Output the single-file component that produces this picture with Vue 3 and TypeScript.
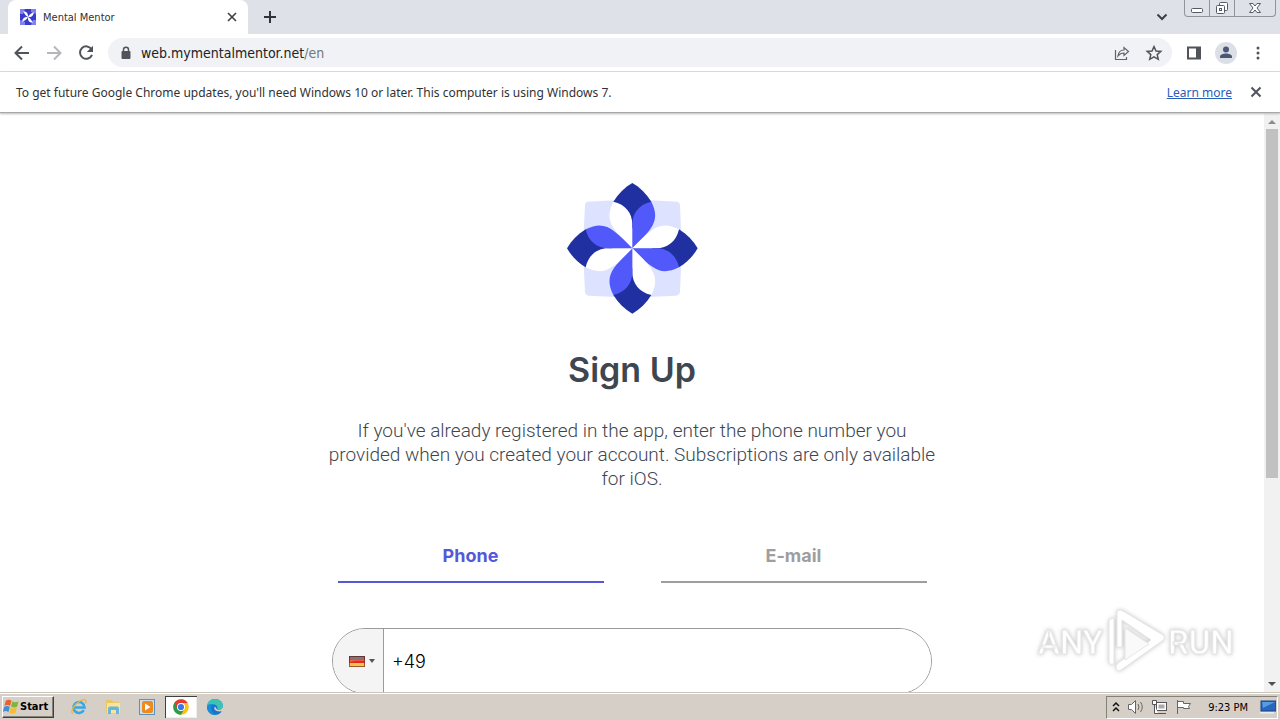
<script setup lang="ts">
import { ref } from 'vue'

type Method = 'phone' | 'email'

const method = ref<Method>('phone')
const phone = ref('+49')
const address = ref('web.mymentalmentor.net')
const quarterTurns = [0, 90, 180, 270]
const methods: { id: Method; label: string }[] = [
  { id: 'phone', label: 'Phone' },
  { id: 'email', label: 'E-mail' },
]
</script>

<template>
  <div class="screen">
    <header class="tab-strip">
      <div class="prev-tab"></div>
      <div class="tab">
        <svg class="favicon" viewBox="0 0 16 16" aria-hidden="true">
          <rect width="16" height="16" fill="#3a3ad0" />
          <path d="M0 0h5L3 5H0zM16 0v5l-5-2V0zM16 16h-5l2-5h3zM0 16v-5l5 2v3z" fill="#7f83ee" />
          <path d="M8 8C5.500 7 5 5 3 2.500 6 2 8.500 4 8 8zM8 8c1-2.500 3-3 5.500-5C14 6 12 8.500 8 8zM8 8c2.500 1 3 3 5 5.500-3 .500-5.500-1.500-5-5.500zM8 8c-1 2.500-3 3-5.500 5C2 10 4 7.500 8 8z" fill="#fff" />
        </svg>
        <span class="tab-title">Mental Mentor</span>
        <button class="icon-btn" aria-label="Close tab">
          <svg viewBox="0 0 16 16" width="16" height="16"><path d="M4 4l8 8M12 4l-8 8" stroke="#3c4043" stroke-width="1.600" /></svg>
        </button>
      </div>
      <button class="icon-btn new-tab" aria-label="New tab">
        <svg viewBox="0 0 16 16" width="16" height="16"><path d="M8 2v12M2 8h12" stroke="#30343a" stroke-width="2" /></svg>
      </button>
      <button class="icon-btn tab-search" aria-label="Search tabs">
        <svg viewBox="0 0 16 16" width="16" height="16"><path d="M3.500 5.500L8 10l4.500-4.500" fill="none" stroke="#3c4043" stroke-width="2" /></svg>
      </button>
      <div class="window-controls">
        <button aria-label="Minimize">
          <svg viewBox="0 0 24 16" width="24" height="16"><rect x="6.500" y="8.500" width="11" height="4" rx="1" fill="#fff" stroke="#555b66" /></svg>
        </button>
        <button aria-label="Restore">
          <svg viewBox="0 0 24 16" width="24" height="16" fill="#fff" stroke="#555b66"><rect x="9.500" y="2.500" width="8" height="8" rx="1" /><rect x="6.500" y="5.500" width="8" height="8" rx="1" /><rect x="9.500" y="8.500" width="2" height="2" /></svg>
        </button>
        <button class="close-window" aria-label="Close">
          <svg viewBox="0 0 24 16" width="24" height="16"><path d="M6.500 3.500h3.500l2 2.500 2-2.500h3.500L14 8l3.500 4.500H14l-2-2.500-2 2.500H6.500L10 8z" fill="#fff" stroke="#555b66" /></svg>
        </button>
      </div>
    </header>

    <nav class="toolbar">
      <button class="icon-btn" aria-label="Back">
        <svg viewBox="0 0 20 20" width="20" height="20" fill="none" stroke="#50545a" stroke-width="2"><path d="M17 10H4M10 3.500L3.500 10l6.500 6.500" /></svg>
      </button>
      <button class="icon-btn" aria-label="Forward" disabled>
        <svg viewBox="0 0 20 20" width="20" height="20" fill="none" stroke="#b5b7ba" stroke-width="2"><path d="M3 10h13M10 3.500l6.500 6.500-6.500 6.500" /></svg>
      </button>
      <button class="icon-btn" aria-label="Reload">
        <svg viewBox="0 0 20 20" width="20" height="20"><path d="M15.600 6.500A6.200 6.200 0 1 0 16 11.800" fill="none" stroke="#50545a" stroke-width="2" /><path d="M17 2.800V9h-6.200z" fill="#50545a" /></svg>
      </button>
      <div class="omnibox">
        <svg class="lock" viewBox="0 0 12 14" width="12" height="14"><rect x="1.500" y="5" width="9" height="8" rx="1" fill="#50545a" /><path d="M3.500 6V3.800a2.500 2.500 0 0 1 5 0V6" fill="none" stroke="#50545a" stroke-width="1.500" /></svg>
        <a class="url" href="#">{{ address }}<span>/en</span></a>
        <button class="icon-btn" aria-label="Share">
          <svg viewBox="0 0 18 18" width="18" height="18" fill="none" stroke="#5f6368" stroke-width="1.200"><path d="M2.500 6v9.500h11V13" /><path d="M5 12c.500-4 3-6 6-6V3.500L15.500 7.500 11 11.500V9C8.500 9 6.500 10 5 12z" /></svg>
        </button>
        <button class="icon-btn" aria-label="Bookmark this page">
          <svg viewBox="0 0 18 18" width="18" height="18"><path d="M9 2.500l2 4.500 4.800.400-3.600 3.200 1.100 4.700L9 12.800l-4.300 2.500 1.100-4.700-3.600-3.200L7 7z" fill="none" stroke="#50545a" stroke-width="1.500" /></svg>
        </button>
      </div>
      <div class="toolbar-end">
        <button class="icon-btn" aria-label="Side panel">
          <svg viewBox="0 0 16 16" width="16" height="16"><path d="M1 1.500h14v13H1zM3 3.500v9h7v-9z" fill="#50545a" fill-rule="evenodd" /></svg>
        </button>
        <button class="icon-btn" aria-label="Profile">
          <svg viewBox="0 0 22 22" width="22" height="22"><circle cx="11" cy="11" r="11" fill="#dcdfe5" /><circle cx="11" cy="7.500" r="3" fill="#4b5876" /><path d="M5 16v-1.500c0-2 3.500-3 6-3s6 1 6 3V16z" fill="#4b5876" /></svg>
        </button>
        <button class="icon-btn" aria-label="Menu">
          <svg viewBox="0 0 16 16" width="16" height="16" fill="#50545a"><circle cx="8" cy="3" r="1.500" /><circle cx="8" cy="8" r="1.500" /><circle cx="8" cy="13" r="1.500" /></svg>
        </button>
      </div>
    </nav>

    <aside class="infobar">
      <p>To get future Google Chrome updates, you'll need Windows 10 or later. This computer is using Windows 7.</p>
      <a href="#">Learn more</a>
      <button class="icon-btn" aria-label="Dismiss">
        <svg viewBox="0 0 16 16" width="16" height="16"><path d="M3.500 3.500l9 9M12.500 3.500l-9 9" stroke="#50545a" stroke-width="2" /></svg>
      </button>
    </aside>

    <div class="viewport">
      <main class="page">
        <svg class="logo" viewBox="-202 -202 402 402" role="img" aria-label="Mental Mentor">
          <path d="M-135-140Q0-150 135-140Q142-138 143-130Q150 0 143 130Q142 140 130 142Q0 150-130 142Q-141 141-142 130Q-150 0-142-130Q-141-139-135-140Z" fill="#dde2ff" />
          <g v-for="turn in quarterTurns" :key="turn" :transform="`rotate(${turn})`">
            <path d="M0-196C-23-183-42-164-57-140L-5-60H5L57-140C42-164 23-183 0-196Z" fill="#2130a0" />
            <path d="M0 0C-58-57-86-82-57-140C-20-132 0-105 0-72Z" fill="#fff" />
            <path d="M0 0C58-57 86-82 57-140C20-132 0-105 0-72Z" fill="#5259fb" />
          </g>
        </svg>
        <h1>Sign Up</h1>
        <p class="lead">If you've already registered in the app, enter the phone number you provided when you created your account. Subscriptions are only available for iOS.</p>
        <div class="methods" role="tablist">
          <button
            v-for="m in methods"
            :key="m.id"
            role="tab"
            :aria-selected="method === m.id"
            :class="{ active: method === m.id }"
            @click="method = m.id"
          >{{ m.label }}</button>
        </div>
        <div class="phone-field">
          <button class="country" aria-label="Country: Germany">
            <svg viewBox="0 0 16 11" width="16" height="11"><rect width="16" height="4" fill="#504848" /><rect y="4" width="16" height="3" fill="#e52a18" /><rect y="7" width="16" height="4" fill="#fbc24a" /><path d="M1 1h14v4q-7-1-14 1z" fill="#fff" fill-opacity=".25" /><rect x=".5" y=".5" width="15" height="10" fill="none" stroke="#6d2f25" stroke-opacity=".7" /></svg>
            <svg viewBox="0 0 6 4" width="6" height="4"><path d="M0 0h6L3 4z" fill="#555" /></svg>
          </button>
          <input v-model="phone" type="tel" aria-label="Phone number" />
        </div>
      </main>
      <div class="scrollbar" aria-hidden="true">
        <svg viewBox="0 0 16 14" width="16" height="14"><path d="M4 11h8L8 7z" fill="#8b8b8b" /></svg>
        <div class="thumb"></div>
        <svg viewBox="0 0 16 16" width="16" height="16"><path d="M4 6h8l-4 4z" fill="#505050" /></svg>
      </div>
      <svg class="watermark" viewBox="0 0 210 72" role="img" aria-label="ANY RUN">
        <g class="mark">
          <text x="6" y="48">ANY</text>
          <path d="M77 56V15q0-2 5-3v46q-5 1-5-2zM85 5q3-2 6 0l40 24q3 3-1 6l-41 29q-4 2-5-2 0-3 2-5l33-23L90 14v27h-5z" />
          <path d="M93 22v32l24-16z" fill="#fafafa" />
          <text x="136" y="48">RUN</text>
        </g>
      </svg>
    </div>

    <footer class="taskbar">
      <button class="start">
        <svg viewBox="0 0 18 18" width="17" height="17"><path d="M3 3c2-1.500 4-1.500 6 0L7.500 8.500c-2-1.500-4-1.500-6 0z" fill="#e8622c" /><path d="M10 3.500c2 1.300 4 1.300 6.500 0L15 9c-2 1.500-4.500 1.200-6.500 0z" fill="#7fb540" /><path d="M1.200 9.500c2-1.500 4-1.500 6 0L5.700 15c-2-1.500-4-1.500-6 0z" fill="#3f8fd6" /><path d="M8.200 10c2 1.300 4 1.300 6.500 0l-1.500 5.500c-2 1.500-4.500 1.200-6.500 0z" fill="#f5bd32" /></svg>
        Start
      </button>
      <div class="tasks">
        <button aria-label="Internet Explorer">
          <svg viewBox="0 0 18 18" width="18" height="18" fill="none"><path d="M13.800 12.200A5.500 5.500 0 1 1 14.500 9.500H5" stroke="#3aa6e4" stroke-width="2.600" /><path d="M3 15.500C-.5 15 4 6.500 10 3c5-2.500 7-1.500 5.500 2.500" stroke="#e8b83c" stroke-width="1.300" /></svg>
        </button>
        <button aria-label="Windows Explorer">
          <svg viewBox="0 0 18 18" width="18" height="18"><path d="M2 2h6l1 2h6v11H2z" fill="#e9c95f" /><path d="M3 5h13v10H3z" fill="#f8e59a" /><path d="M4 16v-5c0-2 1-2.500 3-2.500h5c2 0 3 .500 3 2.500v5h-3v-4H7v4z" fill="#68b6da" /></svg>
        </button>
        <button aria-label="Media Player">
          <svg viewBox="0 0 18 18" width="18" height="18"><rect x="1.500" y="1.500" width="15" height="15" fill="#c9e0f2" stroke="#5a93c2" /><rect x="4" y="3" width="11" height="12" rx="2" fill="#f08a1c" /><path d="M7 5.500v7l5.500-3.500z" fill="#fff" /></svg>
        </button>
        <button class="current" aria-label="Google Chrome">
          <svg viewBox="0 0 18 18" width="18" height="18"><circle cx="9" cy="9" r="7.800" fill="#fbc116" /><path d="M9 9L2.250 5.100A7.800 7.800 0 0 0 9 16.800l3.400-5.900z" fill="#2a9c4a" /><path d="M9 5.100h6.750a7.800 7.800 0 0 0-13.500 0L5.600 11z" fill="#e33b2e" /><circle cx="9" cy="9" r="4" fill="#fff" /><circle cx="9" cy="9" r="3.100" fill="#3a78e8" /></svg>
        </button>
        <button aria-label="Microsoft Edge">
          <svg viewBox="0 0 18 18" width="18" height="18"><circle cx="9" cy="9" r="8" fill="#1774cc" /><path d="M1 9C1 4.500 4.500 1 9 1s8 3 8 7c0 3-3 4.500-6 3.500 1-1.500.500-4.500-3-5C5 6 2 6.500 1 9z" fill="#3cc3b4" /><path d="M1 9c1-3 4-3.500 6.500-2.500C4 8 4.500 14 9.500 16.900 4.500 17.500 1 13.500 1 9z" fill="#1b8bdc" /><path d="M9 8.500c-2 2 0 5.500 6.500 4.800l1.500 1V9c-1 3-5 3.500-6 2.500z" fill="#d6cfc7" /></svg>
        </button>
      </div>
      <div class="tray">
        <svg viewBox="0 0 10 12" width="10" height="12" fill="none" stroke="#111" stroke-width="1.500"><path d="M2 5l3-3 3 3M2 10l3-3 3 3" /></svg>
        <svg viewBox="0 0 18 16" width="18" height="16" fill="#fff" stroke="#666"><path d="M1.500 5.500h3l4-4v13l-4-4h-3z" /><path d="M11 5q2 3 0 6M13.500 3q3.500 5 0 10" fill="none" /></svg>
        <svg viewBox="0 0 18 16" width="18" height="16" fill="#fff" stroke="#555"><rect x="5.500" y="3.500" width="10" height="8" /><rect x="7.500" y="5.500" width="6" height="4" fill="#aaa" stroke="none" /><path d="M7 14.500h8M1.500 1.500h4v4h-4zM3.500 5.500v9H7" /></svg>
        <svg viewBox="0 0 18 16" width="18" height="16" fill="#fff" stroke="#666"><path d="M2.500 1v14M2.500 2.500h6v2h7l-2 3 1 2h-6v-1h-6z" /></svg>
        <time>9:23 PM</time>
        <svg viewBox="0 0 16 14" width="16" height="14"><rect x="1" y="1" width="15" height="10" fill="#2867bd" stroke="#19437f" /><path d="M2 2h13L3 8z" fill="#579be5" /><path d="M0 12h14v1.500H0z" fill="#e6edf6" /></svg>
      </div>
    </footer>
  </div>
</template>

<style>
html,
body {
  margin: 0;
  overflow: hidden;
}
</style>

<style scoped>
.screen {
  display: flex;
  flex-direction: column;
  height: 100vh;
  background: #fff;
  font-family: "DejaVu Sans Condensed", sans-serif;
  font-size: 12px;
  color: #303236;
}
button {
  padding: 0;
  border: 0;
  background: none;
  font: inherit;
  color: inherit;
}
svg {
  display: block;
  flex: none;
}
.icon-btn {
  display: grid;
  place-items: center;
  flex: none;
}
.tab-strip {
  display: flex;
  flex: none;
  height: 34px;
  background: #dee1e8;
}
.prev-tab {
  width: 8px;
  flex: none;
}
.tab {
  display: flex;
  align-items: center;
  width: 240px;
  box-sizing: border-box;
  padding: 0 8px 0 12px;
  background: #fff;
  border-radius: 8px 8px 0 0;
}
.favicon {
  width: 16px;
  height: 16px;
  margin-right: 7px;
}
.tab-title {
  flex: 1;
  font-size: 11px;
}
.new-tab {
  width: 44px;
}
.tab-search {
  width: 24px;
  margin-left: auto;
}
.window-controls {
  display: flex;
  height: 16px;
  margin: 0 4px 0 10px;
  border: 1px solid #8e939d;
  border-top: 0;
  border-radius: 0 0 4px 4px;
}
.window-controls button {
  width: 25px;
  display: grid;
  place-items: center;
  border-right: 1px solid #8e939d;
}
.window-controls .close-window {
  width: 40px;
  border: 0;
}
.toolbar {
  display: flex;
  align-items: center;
  flex: none;
  height: 37px;
  padding: 0 12px;
  gap: 12px;
  border-bottom: 1px solid #d9dbde;
}
.omnibox {
  display: flex;
  align-items: center;
  flex: 1;
  height: 29px;
  padding: 0 9px 0 12px;
  border-radius: 15px;
  background: #f0f2f5;
  gap: 14px;
}
.lock {
  margin-right: -5px;
}
.url {
  flex: 1;
  font-size: 14px;
  color: #202124;
  text-decoration: none;
}
.url span {
  color: #74777c;
}
.toolbar-end {
  display: flex;
  align-items: center;
  gap: 13px;
  margin: 0 2px;
}
.infobar {
  display: flex;
  align-items: center;
  flex: none;
  height: 40px;
  padding: 0 16px;
  gap: 16px;
  border-bottom: 1px solid #a8a8a8;
  box-shadow: 0 1px 2px #bbb;
  z-index: 1;
  font-family: "Noto Sans", sans-serif;
}
.infobar p {
  flex: 1;
  margin: 0;
}
.infobar a {
  color: #2a5db8;
}
.viewport {
  position: relative;
  display: flex;
  flex: 1;
  min-height: 0;
  overflow: hidden;
}
.page {
  flex: 1;
  display: flex;
  flex-direction: column;
  align-items: center;
  padding-top: 68px;
  font-family: Inter, sans-serif;
  color: #40464f;
}
.logo {
  width: 134px;
  height: 134px;
}
h1 {
  margin: 33px 0 27px;
  font-size: 34px;
  line-height: 44px;
  font-weight: 600;
}
.lead {
  width: 610px;
  max-width: 100%;
  margin: 0;
  font-family: Roboto, sans-serif;
  font-size: 19px;
  line-height: 24px;
  font-weight: 300;
  text-align: center;
}
.methods {
  display: grid;
  grid-template-columns: 1fr 1fr;
  gap: 57px;
  width: 589px;
  max-width: 100%;
  margin: 38px 0 45px;
}
.methods button {
  height: 54px;
  border-bottom: 2px solid #9e9e9e;
  color: #9e9e9e;
  font-size: 18px;
  font-weight: 700;
}
.methods .active {
  border-color: #5559d9;
  color: #5559d9;
}
.phone-field {
  display: flex;
  flex: none;
  width: 600px;
  max-width: 100%;
  height: 66px;
  box-sizing: border-box;
  border: 1px solid #9a9a9a;
  border-radius: 33px;
  overflow: hidden;
}
.country {
  display: flex;
  align-items: center;
  gap: 4px;
  width: 51px;
  flex: none;
  padding-left: 16px;
  box-sizing: border-box;
  background: #f4f4f4;
  border-right: 1px solid #9a9a9a;
}
.phone-field input {
  flex: 1;
  min-width: 0;
  padding: 0 8px;
  border: 0;
  outline: 0;
  background: #fff;
  font: 300 18px Inter, sans-serif;
  color: #000;
}
.scrollbar {
  display: flex;
  flex-direction: column;
  width: 16px;
  background: #f1f1f1;
}
.scrollbar .thumb {
  width: 12px;
  height: 349px;
  margin: 2px auto auto;
  background: #c1c1c1;
}
.watermark {
  position: absolute;
  right: 38px;
  bottom: 14px;
  width: 210px;
  height: 72px;
}
.mark {
  fill: #fff;
  stroke: #e6e6e6;
  stroke-width: 1;
  filter: drop-shadow(0 0 2px #c4c4c4);
}
.mark text {
  font: 500 33px Roboto, sans-serif;
}
.taskbar {
  display: flex;
  align-items: center;
  flex: none;
  height: 27px;
  border-top: 1px solid #c9c6b9;
  box-shadow: inset 0 1px #fff;
  background: #d6cfc7;
  color: #000;
}
.start {
  display: flex;
  align-items: center;
  width: 52px;
  height: 22px;
  box-sizing: border-box;
  margin-left: 2px;
  border: 1px solid;
  border-color: #fff #404040 #404040 #fff;
  box-shadow: inset -1px -1px #858078;
  font-size: 11px;
  font-weight: 700;
}
.tasks {
  display: flex;
  margin-left: 9px;
  gap: 2px;
}
.tasks button {
  display: grid;
  place-items: center;
  width: 32px;
  height: 22px;
}
.tasks .current {
  background: #fff;
  box-shadow: inset 1px 1px #404040, inset -1px -1px #eee;
}
.tray {
  display: flex;
  align-items: center;
  gap: 6px;
  height: 21px;
  margin: 1px 2px 0 auto;
  padding: 0 1px 0 4px;
  border: 1px solid;
  border-color: #858078 #fff #fff #858078;
}
.tray time {
  margin: 0 6px 0 9px;
  font-size: 11px;
}
</style>
